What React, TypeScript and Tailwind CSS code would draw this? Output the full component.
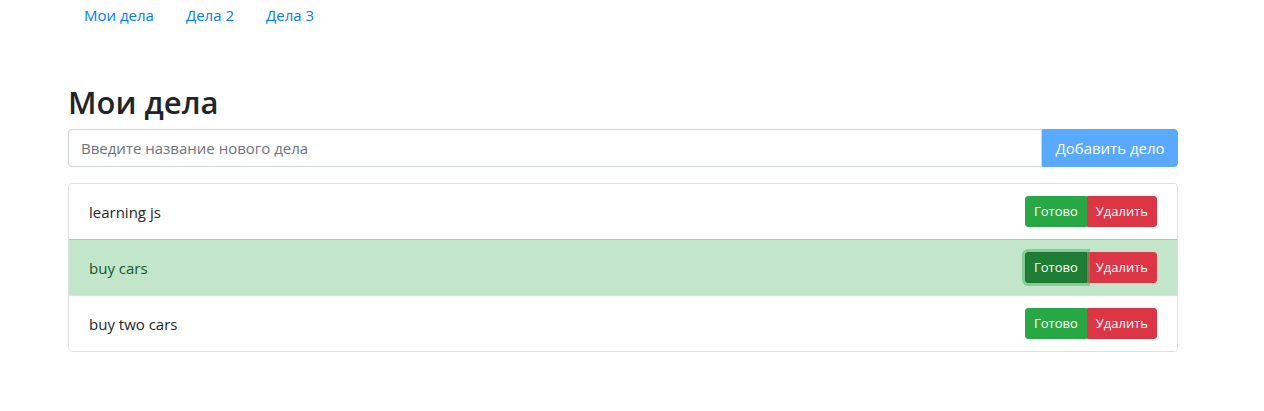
import { FC } from 'react';

interface TodoItem {
	id: number;
	title: string;
	done: boolean;
}

const todos: TodoItem[] = [
	{ id: 1, title: 'learning js', done: false },
	{ id: 2, title: 'buy cars', done: true },
	{ id: 3, title: 'buy two cars', done: false },
];

const navLinks = ['Мои дела', 'Дела 2', 'Дела 3'];

const TodoRow: FC<{ item: TodoItem; first: boolean }> = ({ item, first }) => {
	return (
		<li
			className={`flex items-center justify-between px-5 py-3 ${
				first ? '' : 'border-t border-[rgba(0,0,0,0.125)]'
			} ${item.done ? 'bg-[#c3e6cb] text-[#155724]' : 'bg-white text-[#212529]'}`}
		>
			<span className="text-[15px] leading-6">{item.title}</span>
			<div className="flex">
				<button
					className={`h-[31px] rounded-l-[3px] border px-2 text-[13px] leading-[21px] text-white ${
						item.done
							? 'relative z-10 border-[#1c7430] bg-[#1e7e34] shadow-[0_0_0_3px_rgba(72,180,97,0.5)]'
							: 'border-[#28a745] bg-[#28a745]'
					}`}
				>
					Готово
				</button>
				<button className="h-[31px] rounded-r-[3px] border border-[#dc3545] bg-[#dc3545] px-2 text-[13px] leading-[21px] text-white">
					Удалить
				</button>
			</div>
		</li>
	);
};

export default function App() {
	return (
		<div className="min-h-[411px] bg-white font-['Open_Sans',sans-serif] text-[#212529]">
			<div className="ml-[68px] w-[1110px]">
				<ul className="flex">
					{navLinks.map((link) => (
						<li key={link}>
							<a className="block px-4 pt-[3px] pb-2 text-[15px] leading-6 text-[#007bff]" href="#">
								{link}
							</a>
						</li>
					))}
				</ul>

				<h1 className="mt-[48px] mb-2 text-[31px] leading-[38px] font-semibold">Мои дела</h1>

				<div className="flex h-[38px]">
					<input
						className="h-[38px] flex-1 rounded-l-[4px] border border-[#ced4da] px-3 text-[15px] text-[#495057] outline-none placeholder:text-[#6c757d]"
						placeholder="Введите название нового дела"
					/>
					<button
						disabled
						className="h-[38px] w-[136px] rounded-r-[4px] border border-[#59a9ff] bg-[#59a9ff] text-[15px] leading-6 text-white"
					>
						Добавить дело
					</button>
				</div>

				<ul className="mt-4 overflow-hidden rounded-[4px] border border-[rgba(0,0,0,0.125)]">
					{todos.map((item, i) => (
						<TodoRow key={item.id} item={item} first={i === 0} />
					))}
				</ul>
			</div>
		</div>
	);
}
